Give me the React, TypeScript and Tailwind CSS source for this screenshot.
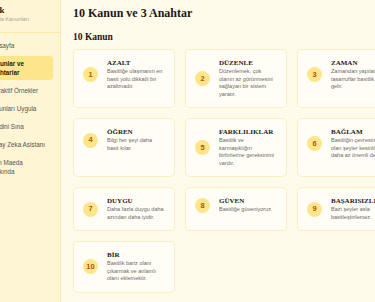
import React from "react";

type Law = { no: number; title: string; text: string };

const laws: Law[] = [
  { no: 1, title: "AZALT", text: "Basitliğe ulaşmanın en basit yolu dikkatli bir azaltmadır." },
  { no: 2, title: "DÜZENLE", text: "Düzenlemek, çok olanın az görünmesini sağlayan bir sistem yaratır." },
  { no: 3, title: "ZAMAN", text: "Zamandan yapılan tasarruflar basitlik gibi gelir." },
  { no: 4, title: "ÖĞREN", text: "Bilgi her şeyi daha basit kılar." },
  { no: 5, title: "FARKLILIKLAR", text: "Basitlik ve karmaşıklığın birbirlerine gereksinimi vardır." },
  { no: 6, title: "BAĞLAM", text: "Basitliğin çevresinde olan şeyler kesinlikle daha az önemli değildir." },
  { no: 7, title: "DUYGU", text: "Daha fazla duygu daha azından daha iyidir." },
  { no: 8, title: "GÜVEN", text: "Basitliğe güveniyoruz." },
  { no: 9, title: "BAŞARISIZLIK", text: "Bazı şeyler asla basitleştirilemez." },
  { no: 10, title: "BİR", text: "Basitlik bariz olanı çıkarmak ve anlamlı olanı eklemektir." },
];

const navItems = [
  "Anasayfa",
  "Kanunlar ve Anahtarlar",
  "İnteraktif Örnekler",
  "Kanunları Uygula",
  "Kendini Sına",
  "Yapay Zeka Asistanı",
  "John Maeda Hakkında",
];

const Sidebar: React.FC = () => (
  <aside className="w-[100px] -ml-[39px] shrink-0 bg-[#fef5d4] border-r border-[#fbe9b0] flex flex-col font-['Liberation_Sans',Arial,sans-serif]">
    {/* Brand */}
    <div className="h-[33px] border-b border-[#fbe7a6] pl-[14px] pt-[5px]">
      <div className="font-['Liberation_Serif',serif] font-bold text-[9px] leading-[10px] text-[#1c1917]">
        Basitlik
      </div>
      <div className="pl-[5px] mt-[1px] text-[5.5px] leading-[7px] text-[#a8a29e]">
        Tasarımla Kanunları
      </div>
    </div>

    {/* Nav */}
    <nav className="px-[7px] pt-[5px] flex flex-col gap-[3px]">
      {navItems.map((item, i) => (
        <div
          key={item}
          className={`pl-[20px] pr-[5px] py-[3px] rounded-[3px] text-[6.3px] leading-[9px] ${
            i === 1 ? "bg-[#fde68a] font-bold text-[#1c1917]" : "text-[#57534e]"
          }`}
        >
          {item}
        </div>
      ))}
    </nav>
  </aside>
);

const LawCard: React.FC<{ law: Law }> = ({ law }) => (
  <div className="rounded-[5px] border border-[#fcefc2] bg-[#fffdf6] p-[9px]">
    <div className="flex items-center gap-[9px]">
      <div className="w-[15px] h-[15px] shrink-0 rounded-full bg-[#fde68a] flex items-center justify-center text-[7.5px] font-bold text-[#b45309]">
        {law.no}
      </div>
      <div className="min-w-0 flex-1">
        <h3 className="font-['Liberation_Serif',serif] font-bold text-[7px] leading-[9px] text-[#1c1917] whitespace-nowrap">
          {law.title}
        </h3>
        <p className="text-[5.5px] leading-[7.5px] text-[#6b6b6b]">{law.text}</p>
      </div>
    </div>
  </div>
);

export default function App() {
  return (
    <div className="flex h-[302px] w-[375px] overflow-hidden bg-[#fffbeb] font-['Liberation_Sans',Arial,sans-serif]">
      <Sidebar />

      <main className="flex-1 min-w-0 pl-[12px] pt-[5px]">
        <h1 className="font-['Liberation_Serif',serif] font-bold text-[12px] leading-[16px] text-[#1c1917] whitespace-nowrap">
          10 Kanun ve 3 Anahtar
        </h1>
        <h2 className="mt-[10px] font-['Liberation_Serif',serif] font-bold text-[9.5px] leading-[12px] text-[#1c1917]">
          10 Kanun
        </h2>

        <div className="mt-[6px] grid grid-cols-[102px_102px_102px] gap-x-[10px] gap-y-[10px] w-max">
          {laws.map((law) => (
            <LawCard key={law.no} law={law} />
          ))}
        </div>
      </main>
    </div>
  );
}
